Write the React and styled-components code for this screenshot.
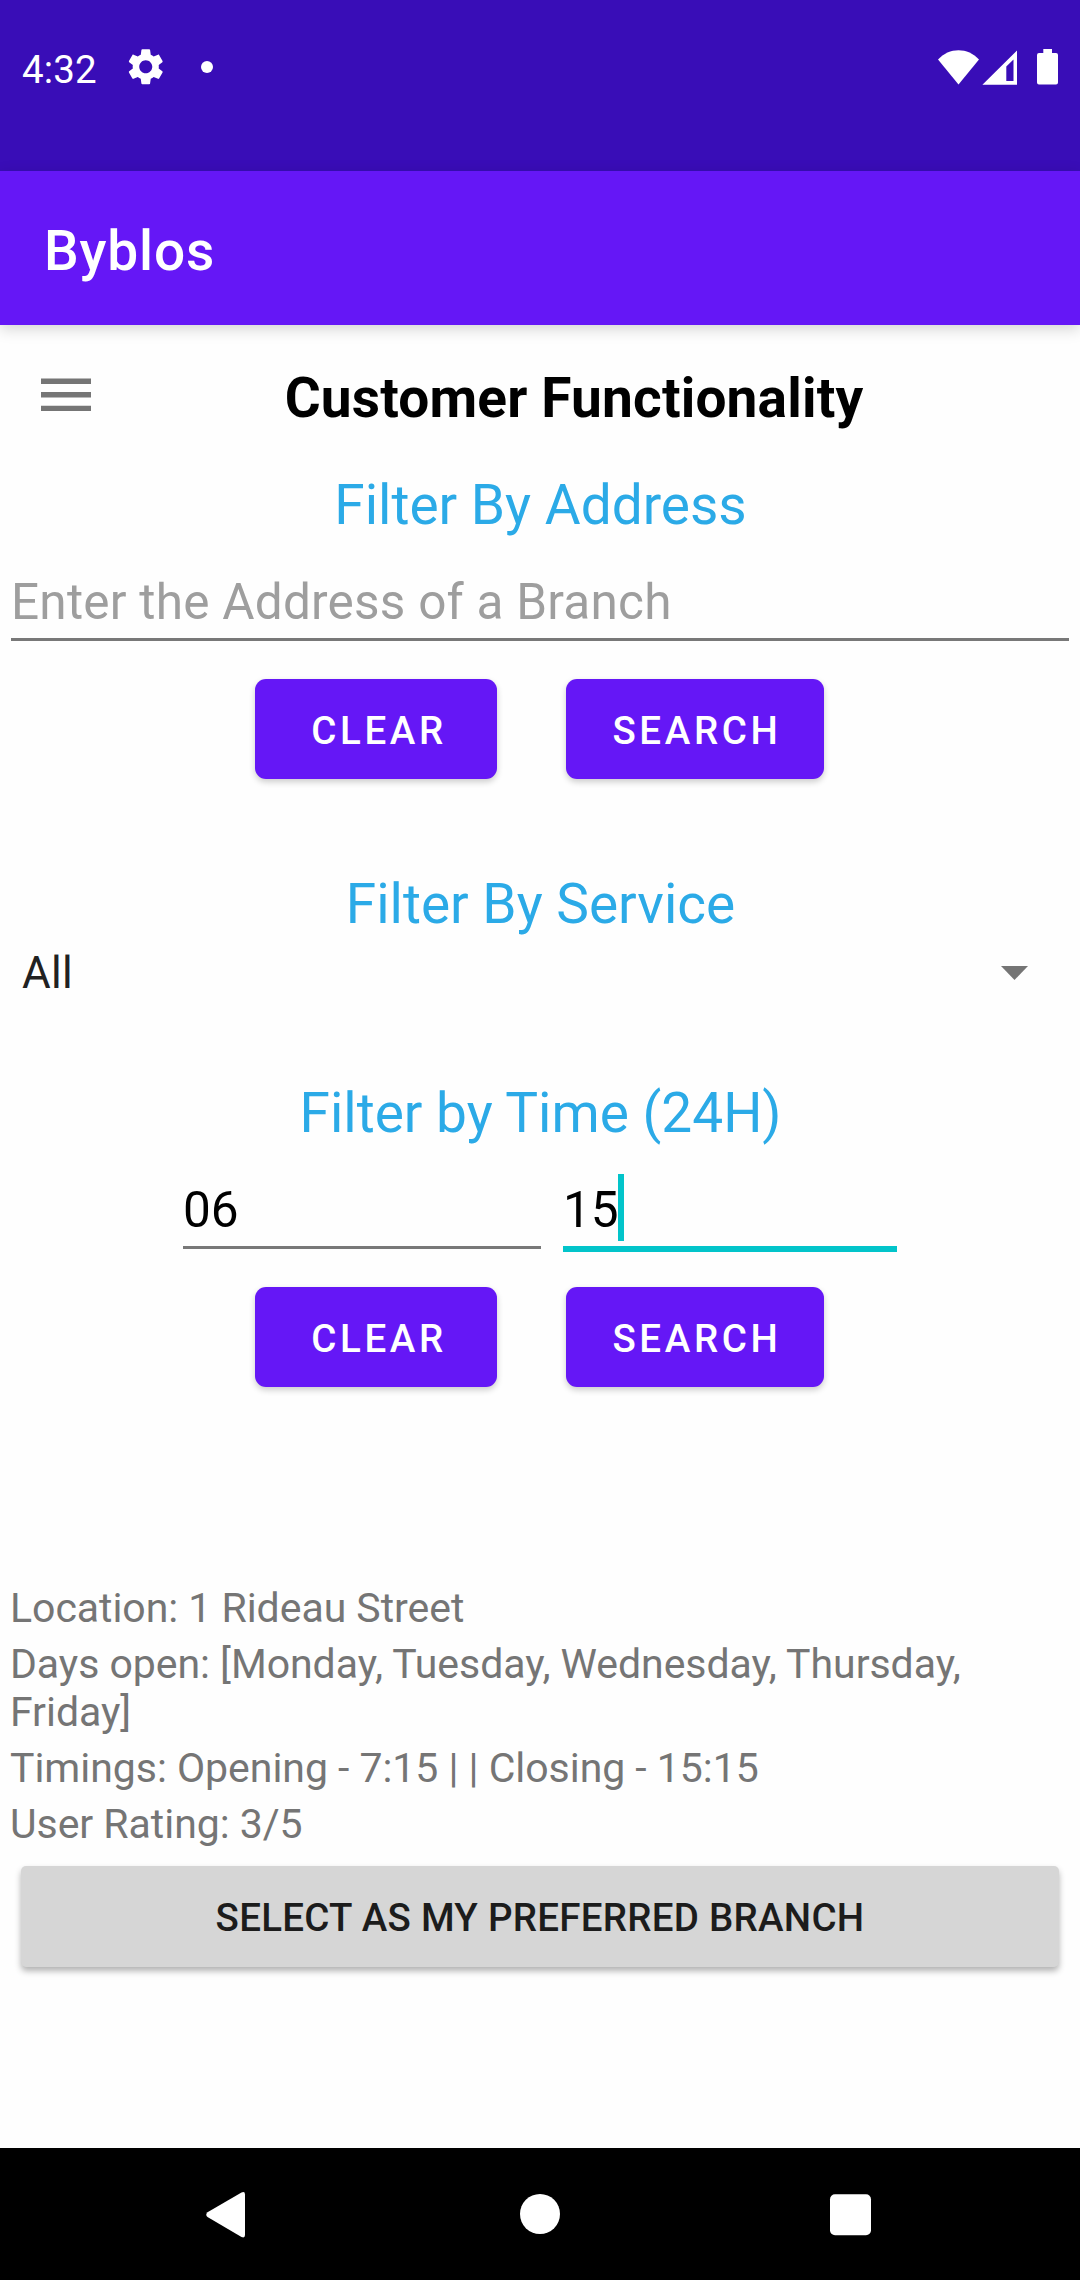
import React from 'react';
import styled, { createGlobalStyle } from 'styled-components';

const GlobalStyle = createGlobalStyle`
  *, *::before, *::after { box-sizing: border-box; }
  body {
    margin: 0;
    background: #fefefe;
    font-family: Roboto, "Noto Sans", sans-serif;
  }
  button { font-family: inherit; border: 0; margin: 0; }
`;

const Screen = styled.div`
  width: 1080px;
  height: 2280px;
  display: flex;
  flex-direction: column;
  background: #fefefe;
  overflow: hidden;
`;

const StatusBar = styled.header`
  flex: none;
  display: flex;
  align-items: flex-start;
  justify-content: space-between;
  height: 171px;
  padding: 46px 21px 0 22px;
  background: #390db7;
  color: #fff;
`;

const StatusGroup = styled.div`
  display: flex;
  align-items: center;
  height: 42px;
`;

const Clock = styled.span`
  width: 74px;
  padding-top: 5px;
  font-size: 38.5px;
  letter-spacing: 0.15px;
  line-height: 46px;
`;

const GearIcon = styled.svg`
  width: 43.5px;
  height: 43.5px;
  margin-left: 28px;
`;

const Dot = styled.span`
  width: 12px;
  height: 12px;
  margin-left: 33.5px;
  border-radius: 50%;
  background: #fff;
`;

const AppBar = styled.div`
  flex: none;
  display: flex;
  align-items: center;
  height: 154px;
  padding: 6px 44px 0;
  background: #6517f6;
  color: #fff;
  font-size: 55px;
  font-weight: 500;
  letter-spacing: 0.85px;
  line-height: 64px;
  box-shadow: 0 4px 14px rgba(0, 0, 0, 0.17);
`;

const Content = styled.main`
  flex: 1;
  display: flex;
  flex-direction: column;
`;

const TitleRow = styled.div`
  display: flex;
  height: 64px;
  margin: 41px 0 43px;
`;

const MenuButton = styled.button`
  display: flex;
  justify-content: center;
  width: 132px;
  padding: 12px 0 0;
  background: none;
`;

const PageTitle = styled.h1`
  flex: 1;
  margin: 0;
  padding-right: 64px;
  color: #000;
  font-size: 55px;
  font-weight: 700;
  letter-spacing: 0.17px;
  line-height: 64px;
  text-align: center;
`;

const Section = styled.section`
  display: flex;
  flex-direction: column;
  margin-bottom: ${(p) => p.$after}px;
`;

const SectionTitle = styled.h2`
  margin: 0;
  padding-left: 1px;
  color: #2baae7;
  font-size: 55px;
  font-weight: 400;
  line-height: 64px;
  text-align: center;
`;

const Field = styled.div`
  width: ${(p) => p.$width}px;
  padding: 36px 0 7px;
  border-bottom: ${(p) => (p.$focused ? '6px solid #02c4ca' : '3px solid #787878')};
  color: ${(p) => (p.$hint ? '#9e9e9e' : '#000')};
  font-size: 49.5px;
  letter-spacing: ${(p) => (p.$hint ? '0.23px' : 'normal')};
  line-height: 58px;
`;

const FieldText = styled.span`
  position: relative;
`;

const Caret = styled.i`
  position: absolute;
  top: -7px;
  right: -5px;
  width: 6px;
  height: 67px;
  background: #02c4ca;
`;

const FieldRow = styled.div`
  display: flex;
  align-items: flex-start;
  justify-content: center;
  gap: 22px;
  height: 107px;
`;

const ButtonRow = styled.div`
  display: flex;
  gap: 69px;
  margin-top: ${(p) => p.$before}px;
  padding-left: 255px;
`;

const ActionButton = styled.button`
  width: ${(p) => p.$width}px;
  height: 100px;
  padding: 4px 0 0 ${(p) => p.$inset}px;
  border-radius: 11px;
  background: #6517f6;
  color: #fff;
  font-size: 38.5px;
  font-weight: 500;
  letter-spacing: 3.65px;
  line-height: 46px;
  text-align: center;
  box-shadow: 0 3px 6px rgba(0, 0, 0, 0.2);
`;

const Spinner = styled.div`
  display: flex;
  align-items: center;
  justify-content: space-between;
  height: 74px;
  padding: 0 52px 0 22px;
  color: #212121;
  font-size: 44px;
  letter-spacing: 0.3px;
  line-height: 52px;
`;

const BranchList = styled.ul`
  display: flex;
  flex-direction: column;
  gap: 8px;
  margin: 0;
  padding: 0 10px;
  list-style: none;
`;

const BranchLine = styled.li`
  color: #757575;
  font-size: 41px;
  letter-spacing: -0.04px;
  line-height: 48px;
`;

const PreferButton = styled.button`
  height: 101px;
  margin: 18px 21px 0;
  padding: 3px 0 0;
  border-radius: 5px;
  background: #d6d6d6;
  color: #1c1c1c;
  font-size: 38.5px;
  font-weight: 500;
  letter-spacing: 0.26px;
  line-height: 46px;
  box-shadow: 0 4px 6px rgba(0, 0, 0, 0.3);
`;

const NavBar = styled.nav`
  flex: none;
  display: flex;
  align-items: center;
  justify-content: space-between;
  height: 132px;
  padding: 0 206px 0 203px;
  background: #000;
`;

const branch = [
  'Location: 1 Rideau Street',
  'Days open: [Monday, Tuesday, Wednesday, Thursday, Friday]',
  'Timings: Opening - 7:15 | | Closing - 15:15',
  'User Rating: 3/5',
];

function FilterButtons({ before }) {
  return (
    <ButtonRow $before={before}>
      <ActionButton $width={242} $inset={6}>CLEAR</ActionButton>
      <ActionButton $width={258} $inset={4}>SEARCH</ActionButton>
    </ButtonRow>
  );
}

export default function App() {
  return (
    <>
      <GlobalStyle />
      <Screen>
        <StatusBar>
          <StatusGroup>
            <Clock>4:32</Clock>
            <GearIcon viewBox="0 0 24 24" fill="#fff">
              <path d="M19.14 12.94c.04-.3.06-.61.06-.94 0-.32-.02-.64-.07-.94l2.03-1.58c.18-.14.23-.41.12-.61l-1.92-3.32c-.12-.22-.37-.29-.59-.22l-2.39.96c-.5-.38-1.03-.7-1.62-.94l-.36-2.54c-.04-.24-.24-.41-.48-.41h-3.84c-.24 0-.43.17-.47.41l-.36 2.54c-.59.24-1.13.57-1.62.94l-2.39-.96c-.22-.08-.47 0-.59.22L2.74 8.87c-.12.21-.08.47.12.61l2.03 1.58c-.05.3-.09.63-.09.94s.02.64.07.94l-2.03 1.58c-.18.14-.23.41-.12.61l1.92 3.32c.12.22.37.29.59.22l2.39-.96c.5.38 1.03.7 1.62.94l.36 2.54c.05.24.24.41.48.41h3.84c.24 0 .44-.17.47-.41l.36-2.54c.59-.24 1.13-.56 1.62-.94l2.39.96c.22.08.47 0 .59-.22l1.92-3.32c.12-.22.07-.47-.12-.61l-2.01-1.58zM12 15.6c-1.98 0-3.6-1.62-3.6-3.6s1.62-3.6 3.6-3.6 3.6 1.62 3.6 3.6-1.62 3.6-3.6 3.6z" />
            </GearIcon>
            <Dot />
          </StatusGroup>
          <StatusGroup>
            <svg width="122" height="42" viewBox="937 46 122 42" fill="#fff">
              <path d="M958.5 84.5 938 59.5c11-12.5 30-12.5 41 0z" />
              <path fillRule="evenodd" d="M1017 50.5v34.2h-34.6zM1013.5 59.5 1006.3 66.500v14.500h7.200z" />
              <path d="M1043.300 49h8.700v4h4q2 0 2 2v27.500q0 2-2 2h-17q-2 0-2-2V55q0-2 2-2h4.300z" />
            </svg>
          </StatusGroup>
        </StatusBar>
        <AppBar>Byblos</AppBar>
        <Content>
          <TitleRow>
            <MenuButton aria-label="Menu">
              <svg width="50" height="33" viewBox="0 0 50 33" fill="#757575">
                <path d="M0 .4h50v5.500H0zM0 14h50v5.600H0zM0 27.700h50v5.300H0z" />
              </svg>
            </MenuButton>
            <PageTitle>Customer Functionality</PageTitle>
          </TitleRow>
          <Section $after={93}>
            <SectionTitle>Filter By Address</SectionTitle>
            <FieldRow>
              <Field $width={1058} $hint>Enter the Address of a Branch</Field>
            </FieldRow>
            <FilterButtons before={35} />
          </Section>
          <Section $after={71}>
            <SectionTitle>Filter By Service</SectionTitle>
            <Spinner>
              All
              <svg width="27" height="14" viewBox="0 0 27 14" fill="#757575">
                <path d="M0 0h27L13.500 14z" />
              </svg>
            </Spinner>
          </Section>
          <Section $after={197}>
            <SectionTitle>Filter by Time (24H)</SectionTitle>
            <FieldRow>
              <Field $width={358}>06</Field>
              <Field $width={334} $focused>
                <FieldText>15<Caret /></FieldText>
              </Field>
            </FieldRow>
            <FilterButtons before={35} />
          </Section>
          <BranchList>
            {branch.map((line) => (
              <BranchLine key={line}>{line}</BranchLine>
            ))}
          </BranchList>
          <PreferButton>SELECT AS MY PREFERRED BRANCH</PreferButton>
        </Content>
        <NavBar>
          <svg width="46" height="48" viewBox="203 2190 46 48" fill="#fff">
            <path d="M207.500 2212.300 241.500 2192.500q3.500-1.500 3.500 2v40.500q0 3.500-3.500 2L207.500 2217q-2.500-2.300 0-4.700z" />
          </svg>
          <svg width="42" height="42" viewBox="0 0 42 42" fill="#fff">
            <circle cx="22" cy="21" r="20" />
          </svg>
          <svg width="46" height="44" viewBox="0 0 46 44" fill="#fff">
            <rect x="2" y="2.200" width="41" height="41" rx="5" />
          </svg>
        </NavBar>
      </Screen>
    </>
  );
}
